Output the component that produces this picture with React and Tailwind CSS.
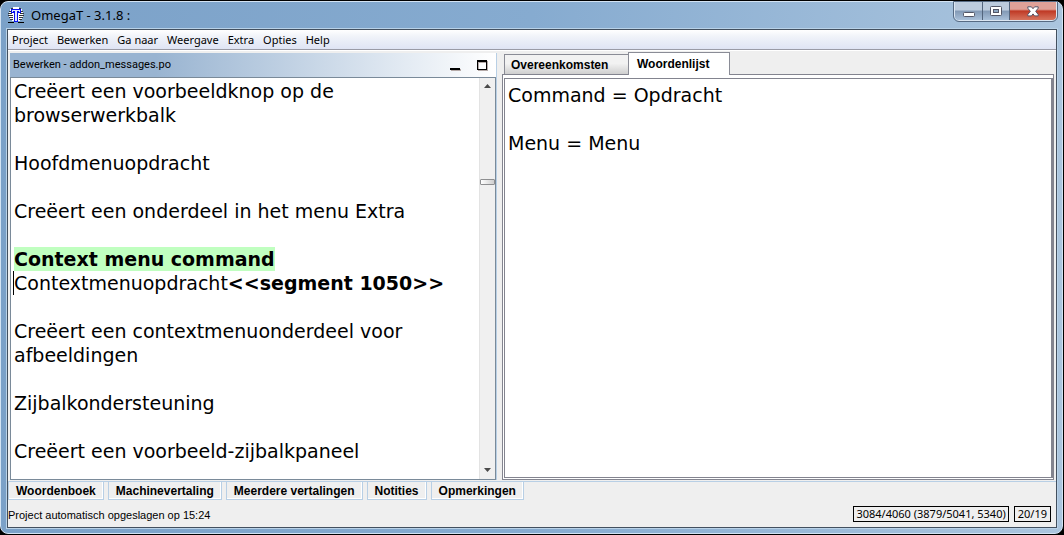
const menus = ['Project', 'Bewerken', 'Ga naar', 'Weergave', 'Extra', 'Opties', 'Help'];
const drawers = ['Woordenboek', 'Machinevertaling', 'Meerdere vertalingen', 'Notities', 'Opmerkingen'];

function Logo() {
  return (
    <svg width="16" height="16" viewBox="0 0 16 16" shapeRendering="crispEdges" aria-hidden="true">
      <path d="M5 0h6v1h2v1h1v2h1v6h-1v2h-1v1h-1v1H4v-1H3v-1H2v-2H1V4h1V2h1V1h2z" fill="#fff" />
      <path d="M3 1h2v1H3zM11 1h2v1h-2zM1 4h2v1H1zM13 4h2v1h-2zM0 6h4v1H0zM12 6h4v1h-4zM0 8h5v1H0zM11 8h5v1h-5zM1 10h4v1H1zM11 10h4v1h-4zM2 12h3v1H2zM11 12h3v1h-3z" fill="#30343c" />
      <path d="M0 15h6v1H0zM10 15h6v1h-6z" fill="#000" />
      <path d="M3 2h10v4h-3v9H6V6H3z" fill="#0a12f0" />
      <path d="M4 3h8v2h-1V4H9v10H7V4H5v1H4z" fill="#dfe8ff" />
    </svg>
  );
}

function WindowButtons() {
  return (
    <div className="flex h-[19px] overflow-hidden rounded-b-[5px] border border-t-0 border-[#dbe6f2] outline outline-[#566a83]">
      <button aria-label="Minimaliseren" className="flex w-7 items-center justify-center border-r border-[#53657d] bg-linear-to-b from-[#bccbdd] from-45% via-[#8299b5] via-50% to-[#a9c0d9]">
        <svg width="12" height="14" viewBox="0 0 12 14" aria-hidden="true">
          <rect x=".5" y="8.5" width="11" height="4" rx="1" fill="#fff" stroke="#535666" />
        </svg>
      </button>
      <button aria-label="Maximaliseren" className="flex w-[27px] items-center justify-center border-r border-[#53657d] bg-linear-to-b from-[#bccbdd] from-45% via-[#8299b5] via-50% to-[#a9c0d9]">
        <svg width="12" height="10" viewBox="0 0 12 10" aria-hidden="true">
          <rect x=".5" y=".5" width="11" height="9" rx="1" fill="#fff" stroke="#535666" />
          <rect x="3.5" y="3.5" width="5" height="3" fill="#8da6c1" stroke="#535666" />
        </svg>
      </button>
      <button aria-label="Sluiten" className="flex w-[46px] items-center justify-center bg-linear-to-b from-[#dfa198] from-40% via-[#bf3824] via-50% to-[#d6735d]">
        <svg width="12" height="11" viewBox="0 0 12 11" aria-hidden="true">
          <path d="M.8.800h3.600L6 2.700 7.600.8h3.600v1.400L8.700 5.300l2.500 3.200v1.400H7.600L6 7.900 4.400 9.900H.8V8.500l2.500-3.200L.8 2.200z" fill="#fff" stroke="#565264" />
        </svg>
      </button>
    </div>
  );
}

export default function App() {
  return (
    <div className="flex min-h-screen flex-col bg-black font-['Liberation_Sans',sans-serif] text-black">
      <div className="mt-px mr-px mb-px flex flex-1 flex-col rounded-lg border border-[#d3e3f3] bg-linear-to-r from-[#7ba1c8] via-[#86abd0] to-[#abc5de] pr-[5px] pb-[5px] pl-1.5">
        <header className="flex h-[27px] items-start justify-between pl-px">
          <div className="flex items-center gap-[7px] pt-[3px]">
            <Logo />
            <h1 className="font-['Noto_Sans',sans-serif] text-[13px] leading-5">OmegaT - 3.1.8 :</h1>
          </div>
          <WindowButtons />
        </header>

        <main className="flex flex-1 flex-col border border-[#43505f] bg-[#efefef] outline outline-[#b9d2e8]">
          <nav className="flex h-5 items-center gap-[9px] border-b border-[#9a9ba6] bg-linear-to-b from-white from-0% via-[#f0f3f9] via-35% to-[#dfe4f4] pl-1">
            {menus.map((m) => (
              <button key={m} className="font-['Noto_Sans',sans-serif] text-[11px] leading-5 whitespace-nowrap">
                {m}
              </button>
            ))}
          </nav>

          <div className="flex flex-1 gap-[5px] border-t border-white pt-0.5 pr-0.5 pb-px pl-0.5">
            <section className="flex min-w-0 flex-[486] flex-col border-r border-[#b8cfe5]">
              <div className="flex h-6 items-center justify-between bg-linear-to-r from-[#99b4d1] from-30% to-white pr-2 pl-[3px]">
                <h2 className="font-['Roboto',sans-serif] text-[11px] leading-4">Bewerken - addon_messages.po</h2>
                <div className="flex gap-4">
                  <button aria-label="Paneel minimaliseren">
                    <svg width="11" height="11" viewBox="0 0 11 11" shapeRendering="crispEdges" aria-hidden="true">
                      <path d="M1 9h10v2H1z" fill="#b5aaa8" />
                      <path d="M0 8h10v2H0z" fill="#000" />
                    </svg>
                  </button>
                  <button aria-label="Paneel maximaliseren">
                    <svg width="11" height="11" viewBox="0 0 11 11" shapeRendering="crispEdges" aria-hidden="true">
                      <path d="M1 1h10v10H1zM2 3v7h8V3z" fill="#b5aaa8" fillRule="evenodd" />
                      <path d="M0 0h10v10H0zM1 2v7h8V2z" fill="#000" fillRule="evenodd" />
                    </svg>
                  </button>
                </div>
              </div>
              <div className="flex flex-1 border border-[#7a8a99] bg-white">
                <div className="flex-1 pt-px pl-[3px] font-['Verdana','DejaVu_Sans',sans-serif] text-[19px] leading-6">
                  <p>Creëert een voorbeeldknop op de browserwerkbalk</p>
                  <p className="mt-6">Hoofdmenuopdracht</p>
                  <p className="mt-6">Creëert een onderdeel in het menu Extra</p>
                  <p className="mt-6 font-bold">
                    <mark className="inline-block bg-[#c0ffc0] text-black">Context menu command</mark>
                  </p>
                  <p className="-ml-px border-l border-black">
                    Contextmenuopdracht<b>&lt;&lt;segment 1050&gt;&gt;</b>
                  </p>
                  <p className="mt-6">Creëert een contextmenuonderdeel voor afbeeldingen</p>
                  <p className="mt-6">Zijbalkondersteuning</p>
                  <p className="mt-6">Creëert een voorbeeld-zijbalkpaneel</p>
                </div>
                <div className="flex w-4 flex-col items-center justify-between border-l border-[#e3e3e3] bg-[#f0f0f0] pt-1.5 pb-[7px]">
                  <div className="flex flex-col items-center gap-[91px]">
                    <svg width="7" height="4" viewBox="0 0 7 4" aria-hidden="true">
                      <path d="M0 4 3.500 0 7 4z" fill="#4a4a4a" />
                    </svg>
                    <div className="h-1.5 w-[15px] rounded-[1px] border border-[#8e8f91] bg-linear-to-r from-white to-[#cfcfcf]" />
                  </div>
                  <svg width="7" height="4" viewBox="0 0 7 4" aria-hidden="true">
                    <path d="M0 0h7L3.500 4z" fill="#4a4a4a" />
                  </svg>
                </div>
              </div>
            </section>

            <section className="flex min-w-0 flex-[552] flex-col">
              <div role="tablist" className="flex h-[21px] items-end pl-0.5 text-[12px] font-bold">
                <button role="tab" aria-selected="false" className="h-5 w-[125px] border border-b-0 border-[#8a8c96] bg-linear-to-b from-[#f2f2f2] from-45% to-[#cfcfcf] pl-1.5 text-left leading-5">
                  Overeenkomsten
                </button>
                <button role="tab" aria-selected="true" className="z-10 -mb-px -ml-px h-[23px] w-[102px] border border-b-0 border-[#8a8c96] bg-white pl-2 text-left leading-5">
                  Woordenlijst
                </button>
              </div>
              <div className="flex flex-1 border border-[#83848f] bg-white pt-[3px] pr-0 pb-px pl-px">
                <div className="flex-1 border border-r-2 border-[#83848f] pt-1 pl-[3px] font-['Verdana','DejaVu_Sans',sans-serif] text-[19px] leading-6">
                  <p>Command = Opdracht</p>
                  <p className="mt-6">Menu = Menu</p>
                </div>
              </div>
            </section>
          </div>

          <div className="flex gap-1 border-t border-[#b8cfe5] text-[12px] font-bold">
            {drawers.map((d) => (
              <button key={d} className="h-[18px] border border-t-0 border-[#b8cfe5] px-[7px] leading-[18px] whitespace-nowrap shadow-[inset_-1px_-1px_0_#fff]">
                {d}
              </button>
            ))}
          </div>

          <footer className="flex h-[27px] items-center justify-between pr-[5px] text-[11px]">
            <span className="pt-1">Project automatisch opgeslagen op 15:24</span>
            <div className="flex gap-[5px] font-['Noto_Sans',sans-serif] leading-[14px]">
              <span className="border border-black px-0.5">3084/4060 (3879/5041, 5340)</span>
              <span className="border border-black px-[3px]">20/19</span>
            </div>
          </footer>
        </main>
      </div>
    </div>
  );
}
